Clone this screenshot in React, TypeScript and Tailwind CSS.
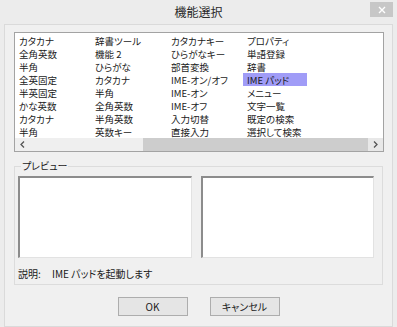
import React from "react";

const columns = [
  ["カタカナ", "全角英数", "半角", "全英固定", "半英固定", "かな英数", "カタカナ", "半角"],
  ["辞書ツール", "機能 2", "ひらがな", "カタカナ", "半角", "全角英数", "半角英数", "英数キー"],
  ["カタカナキー", "ひらがなキー", "部首変換", "IME-オン/オフ", "IME-オン", "IME-オフ", "入力切替", "直接入力"],
  ["プロパティ", "単語登録", "辞書", "IME パッド", "メニュー", "文字一覧", "既定の検索", "選択して検索"],
];

const font = { fontFamily: '"Noto Sans CJK JP", "Noto Sans", sans-serif' };

export default function App() {
  return (
    <div
      className="w-[397px] h-[327px] bg-[#ececec] text-[#1a1a1a] [font-feature-settings:'palt'] overflow-hidden"
      style={font}
    >
      {/* title bar */}
      <div className="relative h-[24px] flex items-center justify-center">
        <span className="text-[12px] leading-none text-[#2a2a2a]">機能選択</span>
        <div className="absolute left-[370px] top-[2px] w-[23px] h-[15px] bg-[#c7c7c7] flex items-center justify-center">
          <svg width="8" height="8" viewBox="0 0 8 8">
            <path d="M1 1L7 7M7 1L1 7" stroke="#fff" strokeWidth="1.4" />
          </svg>
        </div>
      </div>

      <div className="px-[4px]">
        <div className="h-[303px] bg-[#f0f0f0] border border-[#dadada] pt-[7px] pl-[9px]">
          {/* list box */}
          <div className="w-[370px] h-[120px] border border-[#a3a3a3] bg-white flex flex-col">
            <div className="flex pt-[1px] h-[105px]">
              {columns.map((col, ci) => (
                <div key={ci} className="w-[76px] flex flex-col">
                  {col.map((item, ri) => (
                    <div
                      key={ri}
                      className={`w-[64px] h-[13px] pl-[4px] flex items-center overflow-hidden ${
                        ci === 3 && ri === 3 ? "bg-[#a09cf7]" : ""
                      }`}
                    >
                      <span className="text-[9.5px] leading-[12px] whitespace-nowrap">{item}</span>
                    </div>
                  ))}
                </div>
              ))}
            </div>
            {/* horizontal scrollbar */}
            <div className="h-[13px] flex bg-[#efefef]">
              <div className="w-[128px] flex items-center pl-[5px]">
                <svg width="5" height="7" viewBox="0 0 5 7">
                  <path d="M4 0.5L1 3.5L4 6.5" stroke="#555" strokeWidth="1.3" fill="none" />
                </svg>
              </div>
              <div className="w-[225px] bg-[#cdcdcd]" />
              <div className="flex-1 flex items-center justify-center bg-[#e8e8e8]">
                <svg width="5" height="7" viewBox="0 0 5 7">
                  <path d="M1 0.5L4 3.5L1 6.5" stroke="#555" strokeWidth="1.3" fill="none" />
                </svg>
              </div>
            </div>
          </div>

          {/* preview group */}
          <div className="relative mt-[14px] w-[369px] h-[119px] border border-[#dcdcdc] pt-[9px] pl-[3px]">
            <span className="absolute left-[6px] top-[-8px] px-[1px] bg-[#f0f0f0] text-[10px] leading-[14px]">
              プレビュー
            </span>
            <div className="flex gap-[9px]">
              <div className="w-[174px] h-[82px] bg-white border-t-2 border-l-2 border-[#8c8c8c] border-r border-b border-r-[#e2e2e2] border-b-[#e2e2e2]" />
              <div className="w-[173px] h-[82px] bg-white border-t-2 border-l-2 border-[#8c8c8c] border-r border-b border-r-[#e2e2e2] border-b-[#e2e2e2]" />
            </div>
            <div className="flex mt-[10px] text-[10px] leading-[12px]">
              <span className="w-[34px]">説明:</span>
              <span>IME パッドを起動します</span>
            </div>
          </div>

          {/* buttons */}
          <div className="flex justify-center gap-[22px] mt-[12px] pr-[9px]">
            <button className="w-[70px] h-[19px] bg-[#e5e5e5] border border-[#adadad] text-[10px] leading-none">
              OK
            </button>
            <button className="w-[70px] h-[19px] bg-[#e5e5e5] border border-[#adadad] text-[10px] leading-none">
              キャンセル
            </button>
          </div>
        </div>
      </div>
    </div>
  );
}
